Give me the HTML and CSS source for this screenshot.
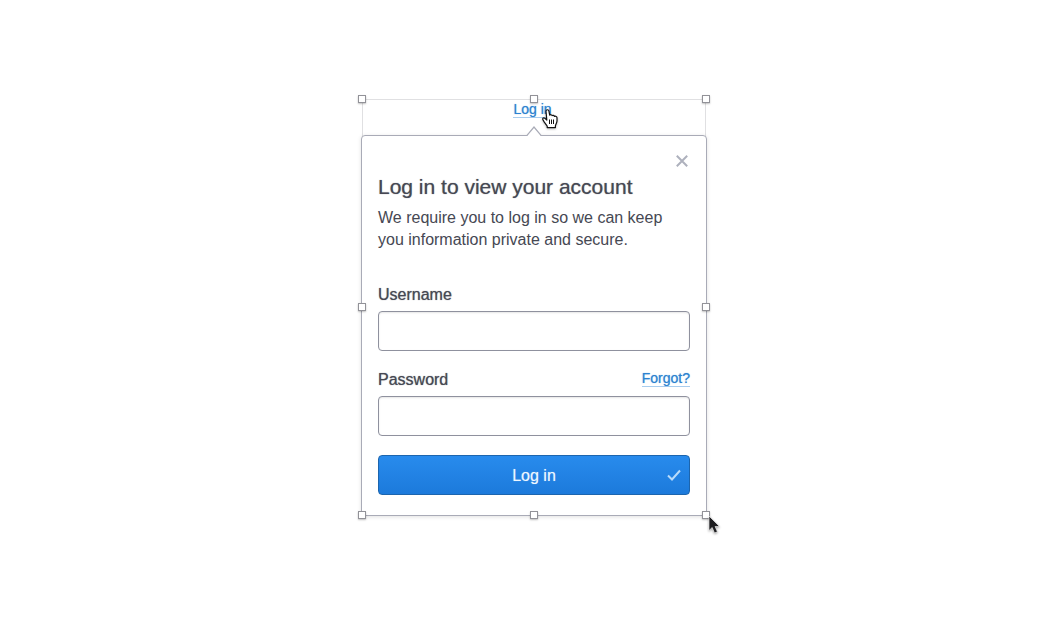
FILE: index.html
```html
<!DOCTYPE html>
<html lang="en">
<head>
<meta charset="utf-8">
<title>Log in</title>
<link rel="stylesheet" href="styles.css">
</head>
<body>
<main class="login">
  <div class="frame"></div>
  <div class="trigger"><a class="link" href="#login">Log in</a></div>
  <form class="card" id="login">
    <svg class="arrow" width="16" height="11" viewBox="0 0 16 11"><path d="M0 11 8 1l8 10z" fill="#fff"/><path d="M0 9.500h1L8 1l7 8.500h1" fill="none" stroke="#a9abb7" stroke-width="1.200"/></svg>
    <button class="close" type="button" aria-label="Close"><svg width="12" height="12" viewBox="0 0 12 12"><path d="M.8.800 11.200 11.200M11.200.800.8 11.200" stroke="#aeb1bd" stroke-width="2"/></svg></button>
    <h1 class="title">Log in to view your account</h1>
    <p class="intro">We require you to log in so we can keep you information private and secure.</p>
    <div class="row"><label class="label" for="user">Username</label></div>
    <input class="field" id="user" type="text">
    <div class="row"><label class="label" for="pass">Password</label><a class="link" href="#forgot">Forgot?</a></div>
    <input class="field" id="pass" type="password">
    <button class="submit" type="submit">Log in<svg class="check" width="14" height="12" viewBox="0 0 14 12"><path d="m1 6.500 4 4L13 1.500" fill="none" stroke="#b9dbfa" stroke-width="2"/></svg></button>
  </form>
  <div class="handles">
    <i class="handle"></i><i class="handle"></i><i class="handle"></i>
    <i class="handle"></i><i></i><i class="handle"></i>
    <i class="handle"></i><i class="handle"></i><i class="handle"></i>
  </div>
  <svg class="hand" width="16" height="20" viewBox="0 0 16 20"><path d="M4 2.200C4 .3 6.600.3 6.900 2l.8 4.200c.6-.8 2.200-.6 2.400.4.700-.6 2-.3 2.300.800 1.200-.5 2.600.1 2.600 1.400v3.200c0 2-1.500 3.200-1.600 5v1.600h-8.200v-1.500L2.300 13.200.9 10.600c-.6-1.300.9-2.400 2-1.300l1.900 1.700z" fill="#fff" stroke="#111" stroke-width="1.200" stroke-linejoin="round"/><path d="M7.500 10.500v4.500M9.500 10.500v4.500M11.500 10.500v4.500" stroke="#111"/></svg>
  <svg class="pointer" width="12" height="19" viewBox="0 0 12 19"><path d="M1 1v14.500l3.200-3 2.300 5.500 2.900-1.200-2.300-5.300h4.400z" fill="#1c1c1f" stroke="#fff" stroke-width=".6"/></svg>
</main>
</body>
</html>
```
FILE: styles.css
```css
* { box-sizing: border-box; }

body {
  margin: 0;
  padding: 99px 16px 32px 20px;
  background: #fff;
  color: #464853;
  font-family: "Liberation Sans", Arial, sans-serif;
  font-size: 16px;
  line-height: 22px;
}

.login {
  position: relative;
  max-width: 346px;
  margin: 0 auto;
}

.frame {
  position: absolute;
  inset: 0 1px;
  border: 1px solid #e0e0e2;
}

.trigger {
  position: relative;
  height: 36px;
  display: flex;
  justify-content: center;
  align-items: flex-start;
  padding: 2px 3px 0 0;
}

.link {
  border-bottom: 1px solid #a9cdee;
  color: #2c82d0;
  font-size: 14px;
  line-height: 16px;
  text-decoration: none;
  text-shadow: 0 0 1px #2c82d0aa;
}

.card {
  position: relative;
  display: flex;
  flex-direction: column;
  padding: 13px 16px 20px;
  border: 1px solid #a9abb7;
  border-radius: 4px;
  background: #fff;
  box-shadow: 0 1px 4px #0000001f;
}

.arrow {
  position: absolute;
  top: -10px;
  left: calc(50% - 8px);
}

.close {
  display: flex;
  justify-content: center;
  align-items: center;
  align-self: flex-end;
  width: 16px;
  height: 24px;
  padding: 0;
  border: 0;
  background: none;
}

.title {
  margin: 2px 0 8px;
  font-size: 21px;
  font-weight: 400;
  line-height: 24px;
  white-space: nowrap;
  text-shadow: 0 0 1px #464853aa;
}

.intro { margin: 0 0 34px; }

.row {
  display: flex;
  justify-content: space-between;
  align-items: flex-start;
  margin-bottom: 6px;
}

.label {
  line-height: 20px;
  text-shadow: 0 0 1px #464853bb;
}

.field {
  width: 100%;
  height: 40px;
  margin: 0 0 19px;
  padding: 0 12px;
  border: 1px solid #8f919e;
  border-radius: 4px;
  background: #fff;
  box-shadow: inset 0 1px 2px #0000001a;
  font: inherit;
}

.submit {
  position: relative;
  height: 40px;
  padding: 2px 0 0;
  border: 1px solid #1c65ae;
  border-radius: 4px;
  background: linear-gradient(#288bed, #1c7adb);
  color: #eef7ff;
  font: inherit;
  text-shadow: 0 0 1px #eef7ff88;
}

.check {
  position: absolute;
  top: 13px;
  right: 8px;
}

.handles {
  position: absolute;
  inset: -4px -3px -3px;
  display: grid;
  grid-template-columns: repeat(3, 8px);
  grid-template-rows: repeat(3, 8px);
  justify-content: space-between;
  align-content: space-between;
  pointer-events: none;
}

.handle {
  border: 1px solid #929298;
  background: #fff;
  box-shadow: 0 1px 2px #00000040;
}

.hand {
  position: absolute;
  top: 10px;
  left: 181px;
  filter: drop-shadow(0 1px 1px #00000040);
}

.pointer {
  position: absolute;
  bottom: -18px;
  right: -13px;
  filter: drop-shadow(0 1px 1px #00000060);
}
```
